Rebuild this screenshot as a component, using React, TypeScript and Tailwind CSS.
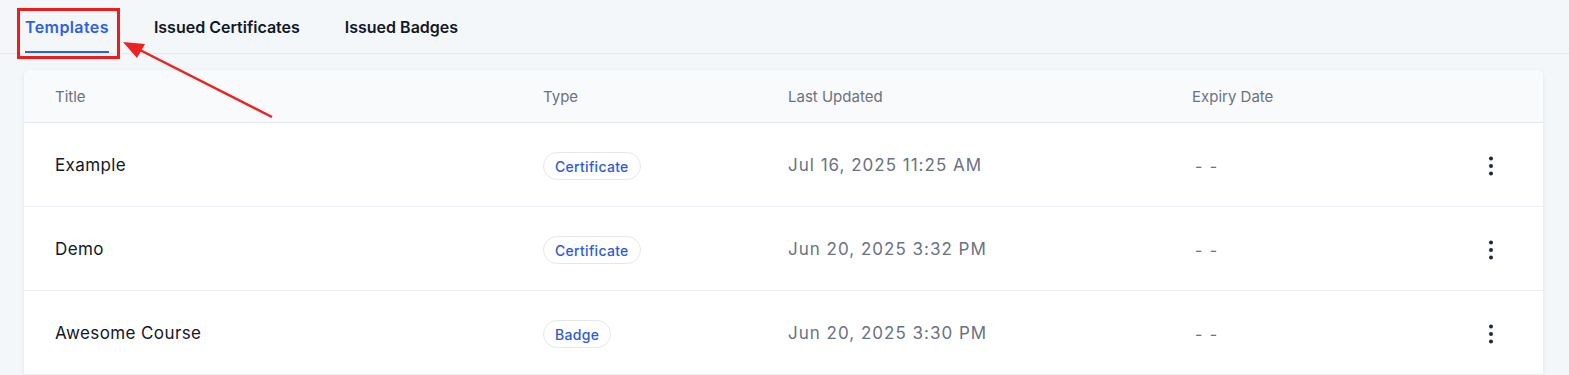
import React from "react";

const rows = [
  { title: "Example", type: "Certificate", date: "Jul 16, 2025 11:25 AM" },
  { title: "Demo", type: "Certificate", date: "Jun 20, 2025 3:32 PM" },
  { title: "Awesome Course", type: "Badge", date: "Jun 20, 2025 3:30 PM" },
];

function Kebab() {
  return (
    <svg width="6" height="22" viewBox="0 0 6 22" className="block">
      <circle cx="3" cy="3.5" r="2" fill="#1f2937" />
      <circle cx="3" cy="11" r="2" fill="#1f2937" />
      <circle cx="3" cy="18.5" r="2" fill="#1f2937" />
    </svg>
  );
}

export default function App() {
  return (
    <div
      className="relative w-[1569px] h-[375px] overflow-hidden bg-[#f4f7fa]"
      style={{ fontFamily: "Inter, 'Noto Sans', sans-serif" }}
    >
      <div className="flex gap-[45px] pl-[25px] h-[54px] border-b border-[#e6ebf0]">
        <div className="relative flex items-center text-[16px] font-semibold tracking-[0.4px] text-[#2f5fe3]">
          Templates
          <div className="absolute left-0 right-0 bottom-0 h-[2px] bg-[#2563eb]" />
        </div>
        <div className="flex items-center text-[16px] font-semibold text-[#111827]">Issued Certificates</div>
        <div className="flex items-center text-[16px] font-semibold text-[#111827]">Issued Badges</div>
      </div>

      <div className="mt-[16px] ml-[24px] w-[1519px] bg-white rounded-t-[6px] shadow-[0_1px_4px_rgba(0,0,0,0.08)] overflow-hidden">
        <div className="grid grid-cols-[488px_245px_404px_1fr_40px] pl-[31px] pr-[32px] pt-[2px] h-[53px] items-center bg-[#f8fafc] border-b border-[#e5e9ee] text-[15px] text-[#6b7280]">
          <div>Title</div>
          <div>Type</div>
          <div>Last Updated</div>
          <div>Expiry Date</div>
          <div />
        </div>
        {rows.map((r, i) => (
          <div
            key={i}
            className="grid grid-cols-[488px_245px_404px_1fr_40px] pl-[31px] pr-[32px] pt-[3px] h-[84px] items-center border-b border-[#eceff3]"
          >
            <div className="text-[17px] tracking-[0.4px] text-[#111827]">{r.title}</div>
            <div>
              <span className="inline-flex items-center h-[28px] px-[11px] rounded-full border border-[#e5e7eb] text-[14px] tracking-[0.3px] font-medium text-[#2d5ae0]">
                {r.type}
              </span>
            </div>
            <div className="text-[17px] tracking-[1px] text-[#6b7280]">{r.date}</div>
            <div className="text-[16px] text-[#6b7280] tracking-[1.5px] pl-[3px]">- -</div>
            <div className="flex justify-center">
              <Kebab />
            </div>
          </div>
        ))}
      </div>

      <div className="absolute left-[17px] top-[8px] w-[103px] h-[51px] border-[3px] border-[#ee1c1c]" />
      <svg className="absolute left-0 top-0" width="300" height="130">
        <line x1="272" y1="117" x2="136" y2="48" stroke="#ee2020" strokeWidth="2.5" />
        <polygon points="123,42 145,44 137,58" fill="#ee2020" />
      </svg>
    </div>
  );
}
